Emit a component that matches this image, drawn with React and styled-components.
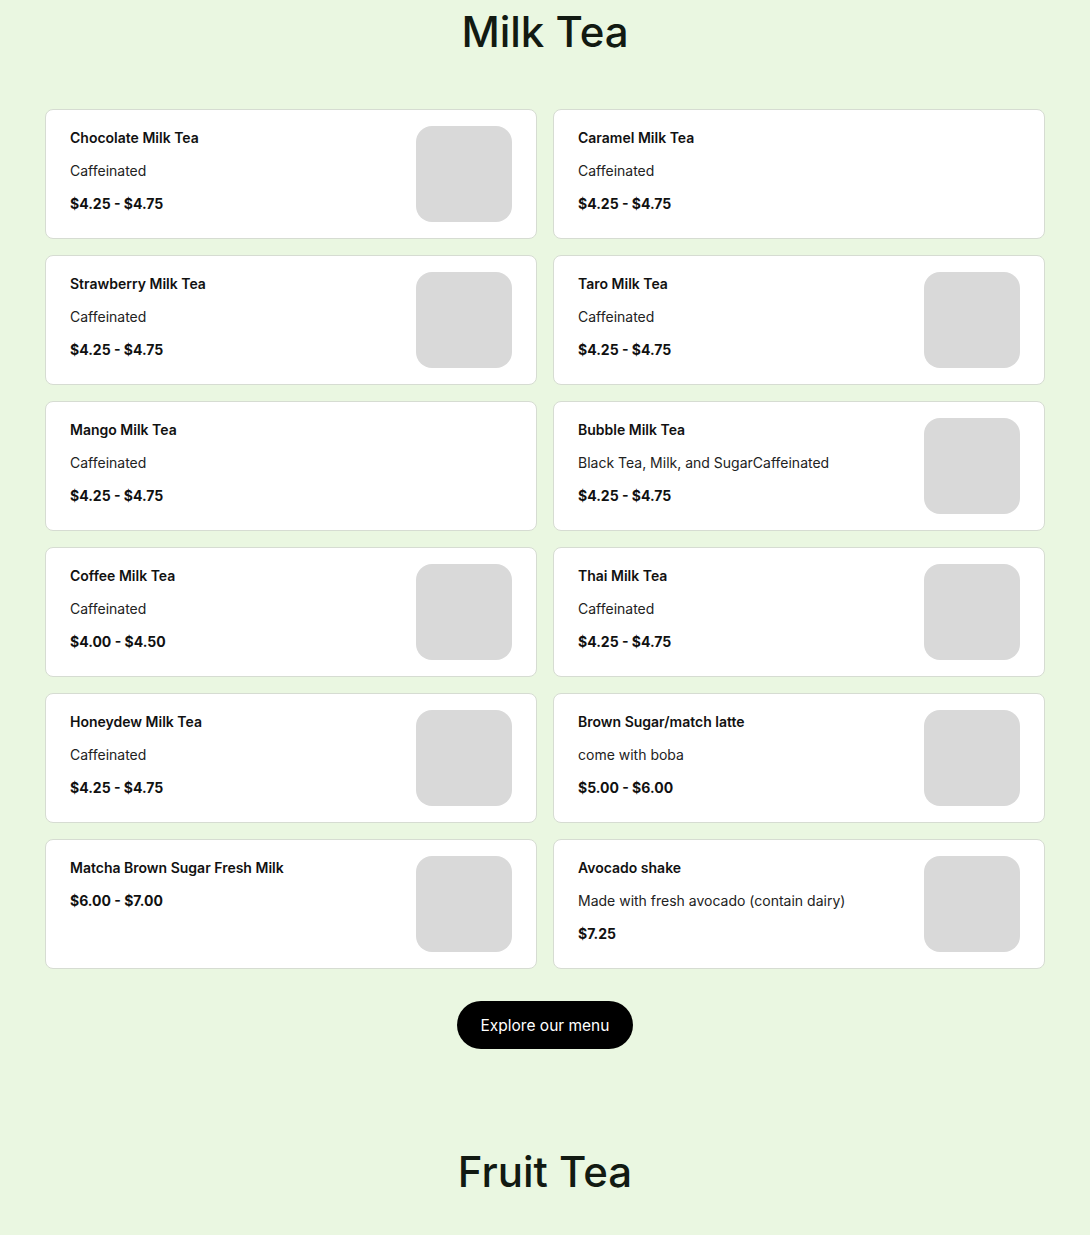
import React from 'react';
import styled, { createGlobalStyle } from 'styled-components';

const GlobalStyle = createGlobalStyle`
  body {
    margin: 0;
    background: #eaf7e1;
    font-family: Inter, 'Noto Sans', sans-serif;
    color: #111;
  }
`;

const Page = styled.div`
  display: flex;
  flex-direction: column;
  align-items: center;
  padding: 0 45px;
`;

const Heading = styled.h2`
  margin: 0;
  font-size: 42px;
  font-weight: 500;
  line-height: 64px;
  color: #121a12;
`;

const Grid = styled.div`
  display: grid;
  grid-template-columns: 1fr 1fr;
  gap: 16px;
  width: 100%;
  margin-top: 45px;
`;

const Card = styled.div`
  display: flex;
  justify-content: space-between;
  gap: 16px;
  min-height: 96px;
  padding: 16px 24px;
  background: #fff;
  border: 1px solid #d6dcd2;
  border-radius: 8px;
`;

const Info = styled.div`
  display: flex;
  flex-direction: column;
  gap: 11px;
  padding-top: 1px;
`;

const Title = styled.div`
  font-size: 14px;
  font-weight: 600;
  line-height: 22px;
`;

const Desc = styled.div`
  font-size: 14px;
  line-height: 22px;
  color: #222;
`;

const Price = styled.div`
  font-size: 14px;
  font-weight: 700;
  line-height: 22px;
`;

const Thumb = styled.div`
  flex: none;
  width: 96px;
  height: 96px;
  border-radius: 16px;
  background: #d9d9d9;
`;

const Button = styled.button`
  margin-top: 32px;
  height: 48px;
  padding: 0 24px;
  border: none;
  border-radius: 24px;
  background: #000;
  color: #fff;
  font-family: Inter, 'Noto Sans', sans-serif;
  font-size: 15.5px;
`;

const Section = styled(Heading)`
  margin-top: 91px;
`;

const items = [
  { name: 'Chocolate Milk Tea', desc: 'Caffeinated', price: '$4.25 - $4.75', img: true },
  { name: 'Caramel Milk Tea', desc: 'Caffeinated', price: '$4.25 - $4.75' },
  { name: 'Strawberry Milk Tea', desc: 'Caffeinated', price: '$4.25 - $4.75', img: true },
  { name: 'Taro Milk Tea', desc: 'Caffeinated', price: '$4.25 - $4.75', img: true },
  { name: 'Mango Milk Tea', desc: 'Caffeinated', price: '$4.25 - $4.75' },
  { name: 'Bubble Milk Tea', desc: 'Black Tea, Milk, and SugarCaffeinated', price: '$4.25 - $4.75', img: true },
  { name: 'Coffee Milk Tea', desc: 'Caffeinated', price: '$4.00 - $4.50', img: true },
  { name: 'Thai Milk Tea', desc: 'Caffeinated', price: '$4.25 - $4.75', img: true },
  { name: 'Honeydew Milk Tea', desc: 'Caffeinated', price: '$4.25 - $4.75', img: true },
  { name: 'Brown Sugar/match latte', desc: 'come with boba', price: '$5.00 - $6.00', img: true },
  { name: 'Matcha Brown Sugar Fresh Milk', price: '$6.00 - $7.00', img: true },
  { name: 'Avocado shake', desc: 'Made with fresh avocado (contain dairy)', price: '$7.25', img: true },
];

const App = () => {
  return (
    <Page>
      <GlobalStyle />
      <Heading>Milk Tea</Heading>
      <Grid>
        {items.map((item) => (
          <Card key={item.name}>
            <Info>
              <Title>{item.name}</Title>
              {item.desc && <Desc>{item.desc}</Desc>}
              <Price>{item.price}</Price>
            </Info>
            {item.img && <Thumb />}
          </Card>
        ))}
      </Grid>
      <Button>Explore our menu</Button>
      <Section>Fruit Tea</Section>
    </Page>
  );
};

export default App;
